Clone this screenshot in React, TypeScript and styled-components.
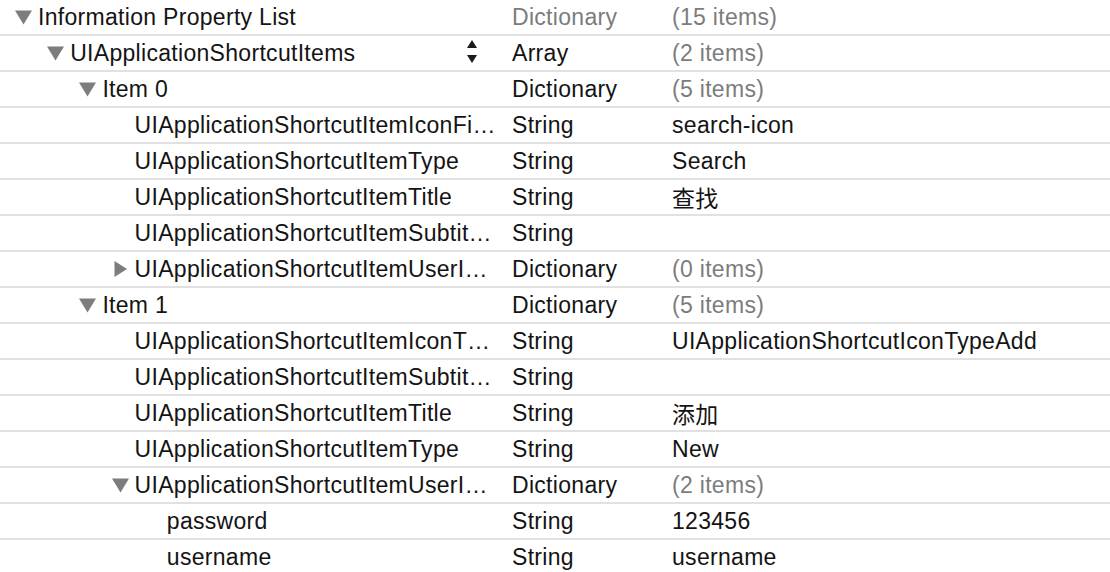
import React from "react";
import styled, { createGlobalStyle } from "styled-components";

const Global = createGlobalStyle`
  html, body { margin: 0; padding: 0; background: #ffffff; overflow: hidden; }
  body { font-family: "Liberation Sans", Arial, "Noto Sans CJK SC", sans-serif; }
`;

type Row = {
  level: number;
  key: string;
  type: string;
  value?: string;
  expand?: "down" | "right";
  dimType?: boolean;
  dimValue?: boolean;
  stepper?: boolean;
};

const rows: Row[] = [
  { level: 0, key: "Information Property List", type: "Dictionary", value: "(15 items)", expand: "down", dimType: true, dimValue: true },
  { level: 1, key: "UIApplicationShortcutItems", type: "Array", value: "(2 items)", expand: "down", dimValue: true, stepper: true },
  { level: 2, key: "Item 0", type: "Dictionary", value: "(5 items)", expand: "down", dimValue: true },
  { level: 3, key: "UIApplicationShortcutItemIconFi…", type: "String", value: "search-icon" },
  { level: 3, key: "UIApplicationShortcutItemType", type: "String", value: "Search" },
  { level: 3, key: "UIApplicationShortcutItemTitle", type: "String", value: "查找" },
  { level: 3, key: "UIApplicationShortcutItemSubtit…", type: "String", value: "" },
  { level: 3, key: "UIApplicationShortcutItemUserI…", type: "Dictionary", value: "(0 items)", expand: "right", dimValue: true },
  { level: 2, key: "Item 1", type: "Dictionary", value: "(5 items)", expand: "down", dimValue: true },
  { level: 3, key: "UIApplicationShortcutItemIconT…", type: "String", value: "UIApplicationShortcutIconTypeAdd" },
  { level: 3, key: "UIApplicationShortcutItemSubtit…", type: "String", value: "" },
  { level: 3, key: "UIApplicationShortcutItemTitle", type: "String", value: "添加" },
  { level: 3, key: "UIApplicationShortcutItemType", type: "String", value: "New" },
  { level: 3, key: "UIApplicationShortcutItemUserI…", type: "Dictionary", value: "(2 items)", expand: "down", dimValue: true },
  { level: 4, key: "password", type: "String", value: "123456" },
  { level: 4, key: "username", type: "String", value: "username" },
];

const Table = styled.div`
  display: flex;
  flex-direction: column;
  width: 1110px;
`;

const RowBox = styled.div`
  display: grid;
  grid-template-columns: 512px 160px 1fr;
  height: 34px;
  border-bottom: 2px solid #e1e1e1;
  align-items: center;
  font-size: 23px;
  letter-spacing: 0.3px;
  color: #141414;
`;

const KeyCell = styled.div<{ $level: number }>`
  display: flex;
  align-items: center;
  padding-left: ${(p) => 15 + p.$level * 32.2}px;
  padding-right: 34px;
  white-space: nowrap;
  overflow: hidden;
`;

const Disclosure = styled.span`
  width: 17px;
  height: 17px;
  margin-right: 6px;
  display: flex;
  align-items: center;
  justify-content: center;
  flex: none;
`;

const KeyText = styled.span`
  flex: 1;
  white-space: nowrap;
`;

const Cell = styled.div<{ $dim?: boolean }>`
  white-space: nowrap;
  color: ${(p) => (p.$dim ? "#7c7c7c" : "#141414")};
`;

const ValueCell = styled(Cell)`
  font-family: "Liberation Sans", Arial, "Noto Sans CJK SC", sans-serif;
`;

const Stepper = styled.span`
  display: flex;
  flex: none;
  width: 12px;
  height: 26px;
`;

const Triangle: React.FC<{ dir: "down" | "right" }> = ({ dir }) =>
  dir === "down" ? (
    <svg width="17" height="15" viewBox="0 0 17 15">
      <polygon points="0,0.5 17,0.5 8.5,14.5" fill="#7d7d7d" />
    </svg>
  ) : (
    <svg width="13" height="16" viewBox="0 0 13 16">
      <polygon points="0.5,0 13,8 0.5,16" fill="#7d7d7d" />
    </svg>
  );

const StepperIcon = () => (
  <Stepper>
    <svg width="12" height="26" viewBox="0 0 12 26">
      <polygon points="6,0 11,8 1,8" fill="#1a1a1a" />
      <polygon points="1,15 11,15 6,23" fill="#1a1a1a" />
    </svg>
  </Stepper>
);

export default function App() {
  return (
    <>
      <Global />
      <Table>
        {rows.map((r, i) => (
          <RowBox key={i}>
            <KeyCell $level={r.level}>
              <Disclosure>{r.expand ? <Triangle dir={r.expand} /> : null}</Disclosure>
              <KeyText>{r.key}</KeyText>
              {r.stepper ? <StepperIcon /> : null}
            </KeyCell>
            <Cell $dim={r.dimType}>{r.type}</Cell>
            <ValueCell $dim={r.dimValue}>{r.value}</ValueCell>
          </RowBox>
        ))}
      </Table>
    </>
  );
}
